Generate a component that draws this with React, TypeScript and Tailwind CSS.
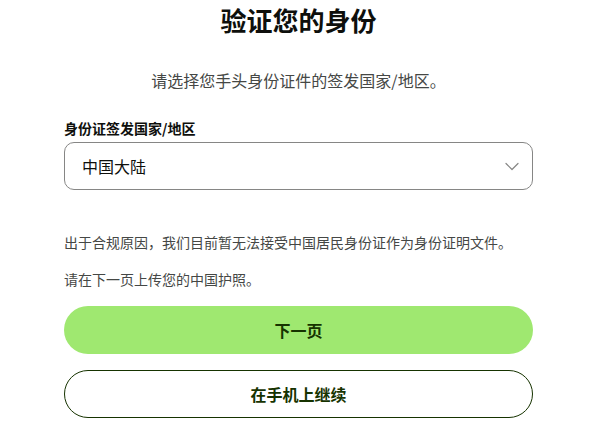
const ChevronDown = () => (
  <svg width="16" height="16" viewBox="0 0 16 16" fill="none" className="text-[#868685]">
    <path d="M2 5.5l6 6 6-6" stroke="currentColor" strokeWidth="1.2" strokeLinecap="round" strokeLinejoin="round" />
  </svg>
);

export default function App() {
  return (
    <div
      className="w-[600px] h-[425px] bg-white overflow-hidden text-[#0e0f0c]"
      style={{ fontFamily: '"Noto Sans CJK SC", "Noto Sans", sans-serif' }}
    >
      <div className="w-[469px] ml-[64px] flex flex-col">
        <h1 className="mt-[2px] text-center text-[26px] leading-[36px] font-bold">验证您的身份</h1>

        <p className="mt-[31px] text-center text-[16px] leading-[22px] text-[#454745]">
          请选择您手头身份证件的签发国家/地区。
        </p>

        <label className="mt-[27px] text-[14px] leading-[20px] font-bold">身份证签发国家/地区</label>

        <div className="mt-[4px] h-[48px] rounded-[10px] border border-[#868685] flex items-center justify-between pl-[17px] pr-[12px]">
          <span className="text-[16px]">中国大陆</span>
          <ChevronDown />
        </div>

        <p className="mt-[42px] text-[14px] leading-[20px] text-[#454745]">
          出于合规原因，我们目前暂无法接受中国居民身份证作为身份证明文件。
        </p>
        <p className="mt-[17px] text-[14px] leading-[20px] text-[#454745]">请在下一页上传您的中国护照。</p>

        <button className="mt-[17px] h-[48px] rounded-full bg-[#9fe870] text-[#163300] text-[16px] font-bold">
          下一页
        </button>
        <button className="mt-[16px] h-[48px] rounded-full border border-[#163300] bg-white text-[#163300] text-[16px] font-bold">
          在手机上继续
        </button>
      </div>
    </div>
  );
}
